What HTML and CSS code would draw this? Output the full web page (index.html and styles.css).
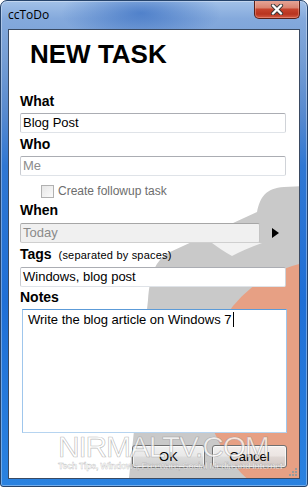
FILE: index.html
```html
<!DOCTYPE html>
<html>
<head>
<meta charset="utf-8">
<link rel="stylesheet" href="styles.css">
</head>
<body>
<div class="window">
  <div class="titlebar">
    <span class="title">ccToDo</span>
    <div class="close">
      <svg width="14" height="11" viewBox="0 0 14 11">
        <path d="M3 1.5 L11 9.5 M11 1.5 L3 9.5" stroke="#3a3a3a" stroke-width="4.2" stroke-linecap="round"/>
        <path d="M3 1.5 L11 9.5 M11 1.5 L3 9.5" stroke="#fff" stroke-width="2.4" stroke-linecap="round"/>
      </svg>
    </div>
  </div>
  <div class="client">
    <h1 class="heading">NEW TASK</h1>
    <div class="label l-what">What</div>
    <div class="field f-what">Blog Post</div>
    <div class="label l-who">Who</div>
    <div class="field f-who">Me</div>
    <div class="check-row"><span class="checkbox"></span><span class="check-label">Create followup task</span></div>
    <div class="label l-when">When</div>
    <div class="when-row"><div class="field f-when">Today</div><span class="arrow"></span></div>
    <div class="label l-tags">Tags <span class="hint">(separated by spaces)</span></div>
    <div class="field f-tags">Windows, blog post</div>
    <div class="label l-notes">Notes</div>
    <div class="notes">Write the blog article on Windows 7<span class="caret"></span></div>
    <div class="buttons"><div class="btn btn-ok">OK</div><div class="btn btn-cancel">Cancel</div></div>
    <div class="watermark"><div class="wm-big">NIRMALTV.COM</div><div class="wm-small">Tech Tips, Windows, Freeware, Social Media and Internet</div></div>
    <div class="grip">
      <svg width="8" height="8" viewBox="0 0 8 8">
        <rect x="6" y="0" width="2" height="2" fill="#9a9a9a"/>
        <rect x="3" y="3" width="2" height="2" fill="#9a9a9a"/>
        <rect x="6" y="3" width="2" height="2" fill="#9a9a9a"/>
        <rect x="0" y="6" width="2" height="2" fill="#9a9a9a"/>
        <rect x="3" y="6" width="2" height="2" fill="#9a9a9a"/>
        <rect x="6" y="6" width="2" height="2" fill="#9a9a9a"/>
      </svg>
    </div>
  </div>
</div>
</body>
</html>
```
FILE: styles.css
```css
html, body {
  margin: 0;
  padding: 0;
  background: #fff;
}

.window {
  width: 308px;
  height: 487px;
  box-sizing: border-box;
  border: 1px solid #25436b;
  border-radius: 7px 7px 3px 3px;
  background:
    radial-gradient(ellipse 80px 30px at 140px 12px, rgba(30, 90, 185, 0.55), rgba(30, 90, 185, 0) 100%),
    linear-gradient(to bottom, #a2c1e8 0px, #84a9dc 18px, #749dd4 60px, #5689cf 115px, #2f77d3 165px, #1f6fd6 300px, #2a82e0 100%);
  box-shadow: inset 0 0 0 1px rgba(255, 255, 255, 0.35);
  display: flex;
  flex-direction: column;
  font-family: "Liberation Sans", Arial, sans-serif;
  overflow: hidden;
}

.titlebar {
  height: 28px;
  flex: none;
  display: flex;
  align-items: flex-start;
  justify-content: space-between;
  padding-left: 7px;
}

.title {
  font-family: "Segoe UI", "Open Sans", sans-serif;
  font-size: 12px;
  line-height: 16px;
  margin-top: 6px;
  color: #000;
}

.close {
  width: 46px;
  height: 19px;
  margin-top: -1px;
  margin-right: 7px;
  box-sizing: border-box;
  border: 1px solid #5a2018;
  border-top: none;
  border-radius: 0 0 5px 5px;
  background: linear-gradient(to bottom, #e7a99b 0%, #da8572 42%, #c6432d 52%, #b8341f 78%, #d45c45 100%);
  box-shadow: inset 0 0 0 1px rgba(255, 200, 190, 0.35);
  display: flex;
  align-items: center;
  justify-content: center;
}

.client {
  flex: 1;
  margin: 0 7px 7px 7px;
  box-sizing: border-box;
  border: 1px solid #3a4a62;
  position: relative;
  padding: 9px 0 0 11px;
  background-color: #fff;
  background-image: url("data:image/svg+xml,%3Csvg xmlns='http://www.w3.org/2000/svg' width='308' height='487'%3E%3Cpath d='M308 186 L284 187 C266 188 260 197 257 212 L170 252 C155 260 150 275 148 300 L128 487 L308 487 Z' fill='%23c9c9c9'/%3E%3Cpath d='M212 243 L262 243 C250 247 240 252 232 256 C224 252 218 247 212 243 Z' fill='%23f2f2f2'/%3E%3Ccircle cx='330' cy='385' r='125' fill='%23e7a084'/%3E%3C/svg%3E");
  background-repeat: no-repeat;
  background-origin: border-box;
  background-position: -8px -29px;
  display: flex;
  flex-direction: column;
  align-items: flex-start;
}

.heading {
  margin: 0;
  padding-left: 10px;
  font-size: 26px;
  line-height: 30px;
  font-weight: bold;
  color: #000;
}

.label {
  font-size: 14px;
  line-height: 17px;
  font-weight: bold;
  color: #000;
}

.l-what { margin-top: 24px; }
.l-who { margin-top: 3px; }
.l-when { margin-top: 4px; }
.l-tags { margin-top: 3px; }
.l-notes { margin-top: 2px; }

.hint {
  font-size: 11px;
  font-weight: normal;
  letter-spacing: 0.2px;
  margin-left: 3px;
}

.field {
  width: 266px;
  height: 20px;
  box-sizing: border-box;
  margin-top: 3px;
  padding: 0 2px;
  border: 1px solid;
  border-color: #abadb3 #d0d3d8 #dfe3e8 #c9ccd2;
  border-radius: 2px;
  background: #fff;
  font-size: 13px;
  line-height: 18px;
  color: #000;
}

.f-who {
  color: #8c8c8c;
}

.check-row {
  margin-top: 9px;
  margin-left: 21px;
  height: 13px;
  display: flex;
  align-items: center;
  gap: 4px;
}

.checkbox {
  width: 13px;
  height: 13px;
  box-sizing: border-box;
  border: 1px solid #b1b1b1;
  background: linear-gradient(135deg, #e6e6e6, #fbfbfb);
}

.check-label {
  font-size: 12px;
  line-height: 13px;
  color: #6d6d6d;
}

.when-row {
  display: flex;
  align-items: center;
  gap: 12px;
  margin-top: 4px;
}

.f-when {
  width: 240px;
  margin-top: 0;
  background: #f0f0f0;
  border-color: #a6a6a6 #c4c4c4 #cfcfcf #bdbdbd;
  color: #8a8a8a;
}

.arrow {
  width: 0;
  height: 0;
  border-left: 7px solid #000;
  border-top: 5px solid transparent;
  border-bottom: 5px solid transparent;
}

.f-tags {
  margin-top: 3px;
}

.notes {
  width: 265px;
  height: 124px;
  box-sizing: border-box;
  margin-top: 3px;
  margin-left: 2px;
  padding: 2px 5px;
  border: 1px solid;
  border-color: #5c9bd8 #9fc6ec #b6d4f0 #9fc6ec;
  background: #fff;
  font-size: 13px;
  line-height: 15px;
  color: #000;
}

.caret {
  display: inline-block;
  width: 0;
  height: 15px;
  border-right: 1px solid #000;
  vertical-align: top;
  margin-left: 1px;
}

.buttons {
  width: 267px;
  margin-top: 12px;
  display: flex;
  justify-content: flex-end;
  gap: 7px;
}

.btn {
  height: 23px;
  box-sizing: border-box;
  border: 1px solid #707070;
  border-radius: 3px;
  background: linear-gradient(to bottom, rgba(244, 244, 244, 0.92) 0%, rgba(236, 236, 236, 0.9) 48%, rgba(222, 222, 222, 0.88) 52%, rgba(206, 206, 206, 0.85) 100%);
  box-shadow: inset 0 0 0 1px rgba(255, 255, 255, 0.7);
  font-size: 13px;
  line-height: 21px;
  text-align: center;
  color: #000;
}

.btn-ok { width: 73px; }
.btn-cancel { width: 75px; }

.watermark {
  position: absolute;
  left: 49px;
  top: 402px;
  color: rgba(255, 255, 255, 0.72);
  pointer-events: none;
  white-space: nowrap;
}

.wm-big {
  font-size: 30px;
  line-height: 29px;
  letter-spacing: -1.2px;
  -webkit-text-stroke: 0.7px rgba(110, 110, 110, 0.45);
}

.wm-small {
  font-size: 9px;
  line-height: 11px;
  font-weight: bold;
  letter-spacing: -0.35px;
  -webkit-text-stroke: 0.4px rgba(110, 110, 110, 0.45);
}

.grip {
  position: absolute;
  right: 2px;
  bottom: 2px;
  width: 8px;
  height: 8px;
  line-height: 0;
}
```
